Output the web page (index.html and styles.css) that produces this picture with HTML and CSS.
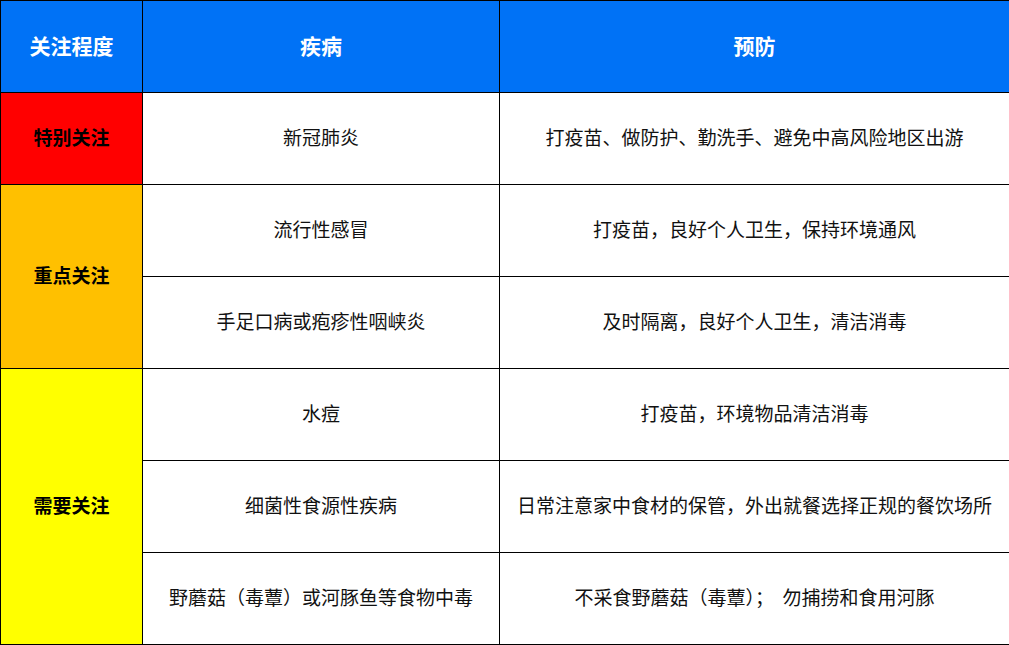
FILE: index.html
```html
<!DOCTYPE html>
<html lang="zh-CN">
<head>
<meta charset="utf-8">
<link rel="stylesheet" href="styles.css">
</head>
<body>
<table class="grid">
  <colgroup>
    <col class="c-level">
    <col class="c-disease">
    <col class="c-prevent">
  </colgroup>
  <thead>
    <tr>
      <th>关注程度</th>
      <th>疾病</th>
      <th>预防</th>
    </tr>
  </thead>
  <tbody>
    <tr>
      <td class="level red">特别关注</td>
      <td>新冠肺炎</td>
      <td>打疫苗、做防护、勤洗手、避免中高风险地区出游</td>
    </tr>
    <tr>
      <td class="level orange" rowspan="2">重点关注</td>
      <td>流行性感冒</td>
      <td>打疫苗，良好个人卫生，保持环境通风</td>
    </tr>
    <tr>
      <td>手足口病或疱疹性咽峡炎</td>
      <td>及时隔离，良好个人卫生，清洁消毒</td>
    </tr>
    <tr>
      <td class="level yellow" rowspan="3">需要关注</td>
      <td>水痘</td>
      <td>打疫苗，环境物品清洁消毒</td>
    </tr>
    <tr>
      <td>细菌性食源性疾病</td>
      <td>日常注意家中食材的保管，外出就餐选择正规的餐饮场所</td>
    </tr>
    <tr>
      <td>野蘑菇（毒蕈）或河豚鱼等食物中毒</td>
      <td>不采食野蘑菇（毒蕈）；&nbsp; 勿捕捞和食用河豚</td>
    </tr>
  </tbody>
</table>
</body>
</html>
```

FILE: styles.css
```css
html, body {
  margin: 0;
  padding: 0;
  background: #ffffff;
}
body {
  font-family: "Microsoft YaHei", "Noto Sans CJK SC", "Noto Sans", sans-serif;
  color: #111111;
}
.grid {
  border-collapse: collapse;
  table-layout: fixed;
  width: 1009px;
}
.c-level { width: 142px; }
.c-disease { width: 357px; }
.c-prevent { width: 510px; }
.grid th,
.grid td {
  border: 1px solid #000000;
  height: 92px;
  padding: 0 0 3px 0;
  box-sizing: border-box;
  text-align: center;
  vertical-align: middle;
  font-size: 19px;
  line-height: 24px;
}
.grid th {
  background: #0072F6;
  color: #ffffff;
  font-size: 21px;
  font-weight: 700;
}
.grid td.level {
  font-weight: 700;
  font-size: 19px;
  color: #000000;
}
.red { background: #FF0000; }
.orange { background: #FFC000; }
.yellow { background: #FFFF00; }
```
